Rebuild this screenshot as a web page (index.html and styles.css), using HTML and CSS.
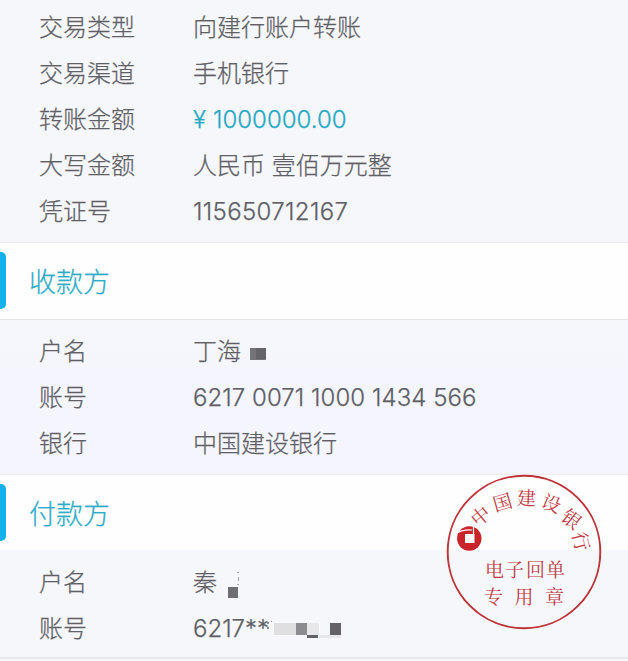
FILE: index.html
```html
<!DOCTYPE html>
<html lang="zh-CN">
<head>
  <meta charset="UTF-8" />
  <title>交易详情</title>
  <meta name="viewport" content="width=device-width, initial-scale=1.0" />
  <link rel="stylesheet" href="styles.css">
</head>
<body>
  <main class="receipt">
    <dl class="details">
      <div class="row"><dt>交易类型</dt><dd>向建行账户转账</dd></div>
      <div class="row"><dt>交易渠道</dt><dd>手机银行</dd></div>
      <div class="row"><dt>转账金额</dt><dd class="amount"><span class="yen">¥</span>1000000.00</dd></div>
      <div class="row"><dt>大写金额</dt><dd>人民币 壹佰万元整</dd></div>
      <div class="row"><dt>凭证号</dt><dd class="voucher">115650712167</dd></div>
    </dl>

    <h2 class="title">收款方</h2>
    <dl class="details payee">
      <div class="row">
        <dt>户名</dt>
        <dd>丁海<svg class="mask-payee" width="16" height="12" viewBox="0 0 16 12"><path fill="#737378" d="M0 0h16v12H0z"/><path fill="#646469" d="M6 0h10v11H6z"/></svg></dd>
      </div>
      <div class="row"><dt>账号</dt><dd class="card">6217 0071 1000 1434 566</dd></div>
      <div class="row"><dt>银行</dt><dd>中国建设银行</dd></div>
    </dl>

    <h2 class="title title-payer">付款方</h2>
    <dl class="details payer">
      <div class="row">
        <dt>户名</dt>
        <dd>秦<svg class="mask-payer" width="12" height="28" viewBox="0 0 12 28"><path fill="#6e6e73" d="M0 16h10v11H0z"/><path fill="#a5a5aa" d="M9 1h2v1H9zM10 6h1v4h-1zM9 13h2v1H9z"/></svg></dd>
      </div>
      <div class="row">
        <dt>账号</dt>
        <dd class="number">6217<span class="stars">**</span><svg class="mask-number" width="76" height="20" viewBox="0 0 76 20">
          <path fill="#8c8c91" d="M1 3h2v2H1zM1 8h2v2H1zM5 2h1v1H5z"/>
          <path fill="#dfdfe2" d="M8 4h22v12H8z"/>
          <path fill="#8c8c90" d="M30 4h11v12H30z"/>
          <path fill="#e8e8eb" d="M41 4h12v12H41zM53 16h22v3H53z"/>
          <path fill="#626267" d="M41 16h11v3H41zM64 4h11v12H64z"/>
        </svg></dd>
      </div>
    </dl>

    <svg class="seal" width="156" height="156" viewBox="0 0 156 156">
      <circle cx="78" cy="78" r="76.3" fill="none" stroke="#bf3238" stroke-width="1.9"/>
      <g class="seal-arc">
        <text transform="translate(33.5 41) rotate(-40)">中</text>
        <text transform="translate(56 27) rotate(-16)">国</text>
        <text transform="translate(80.5 22.5) rotate(2)">建</text>
        <text transform="translate(106 28) rotate(22)">设</text>
        <text transform="translate(126.5 44) rotate(38)">银</text>
        <text transform="translate(136.5 67) rotate(76)">行</text>
      </g>
      <!-- bank logo -->
      <circle cx="23.3" cy="64.5" r="12.2" fill="#c9242b"/>
      <path fill="#fdfcfd" d="M19 60h9.500v9H19z"/>
      <path fill="none" stroke="#fdfcfd" stroke-width="1.2" d="M12 58.500c4-2.500 8-3 14-2.500M27.500 51v10"/>
      <g class="seal-name">
        <text x="48.5 68.500 89.5 109.5" y="103">电子回单</text>
        <text x="47.5 78 108.500" y="129.500">专用章</text>
      </g>
    </svg>
  </main>
</body>
</html>
```
FILE: styles.css
```css
* {
  box-sizing: border-box;
}

body {
  margin: 0;
  background: #f5f7fb;
  color: #5f6065;
  font-family: "Inter", "Noto Sans CJK SC", sans-serif;
  font-size: 24px;
  font-weight: 300;
  -webkit-text-stroke: 0.25px currentColor;
}

.receipt {
  position: relative;
  height: 661px;
  overflow: hidden;
}

.details {
  margin: 0;
  padding: 5px 0 7px 39px;
  background: #f5f7fb;
}

.payee {
  padding-top: 9px;
  background: linear-gradient(#f5f7fb, #f5f6fd 40%);
}

.payer {
  padding-top: 9px;
  padding-bottom: 5px;
  border-bottom: 2px solid #e9eaed;
}

.row {
  display: flex;
  height: 46px;
  line-height: 46px;
  white-space: nowrap;
}

.row dt {
  width: 154px;
}

.row dd {
  display: flex;
  margin: 0;
  white-space: pre;
}

.amount {
  color: #27a9c5;
}

.yen {
  width: 20px;
}

.voucher {
  letter-spacing: 0.35px;
}

.card {
  letter-spacing: 0.05px;
}

.title {
  display: flex;
  align-items: center;
  height: 78px;
  margin: 0;
  padding-bottom: 2px;
  border-top: 1px solid #ebecf0;
  border-bottom: 1px solid #e4e5e9;
  background: #fefefe;
  color: #2bacc9;
  font-size: 27px;
  font-weight: 300;
}

.title-payer {
  height: 77px;
  padding-bottom: 1px;
  border-bottom-color: #f5f7fb;
}

.title::before {
  content: "";
  width: 6px;
  height: 57px;
  margin-right: 23px;
  border-radius: 0 5px 5px 0;
  background: #15b1ea;
}

.mask-payee {
  margin: 19px 0 0 9px;
}

.mask-payer {
  margin: 11px 0 0 11px;
}

.mask-number {
  margin: 13px 0 0 -3px;
}

.seal {
  position: absolute;
  top: 474px;
  left: 446px;
}

.seal text {
  fill: #bf3a42;
  font-family: "Noto Serif CJK SC", "Noto Sans CJK SC", serif;
  font-size: 19px;
  font-weight: 400;
  text-anchor: middle;
  -webkit-text-stroke: 0;
}

.seal-arc text {
  dominant-baseline: central;
}
```
